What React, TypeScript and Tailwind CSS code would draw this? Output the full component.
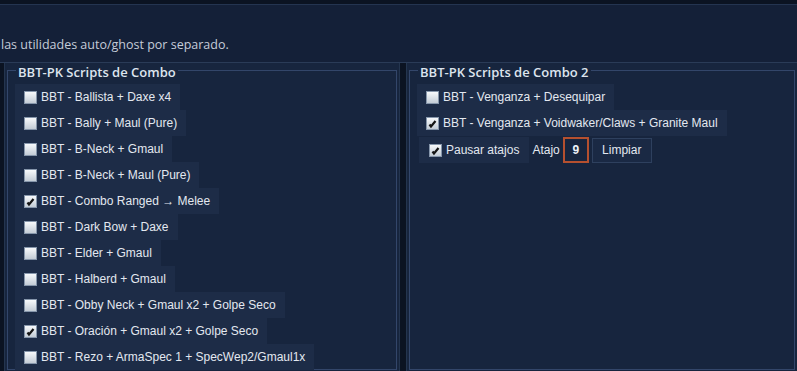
import { useState } from "react";

type Item = { label: string; checked: boolean };

const leftItems: Item[] = [
  { label: "BBT - Ballista + Daxe x4", checked: false },
  { label: "BBT - Bally + Maul (Pure)", checked: false },
  { label: "BBT - B-Neck + Gmaul", checked: false },
  { label: "BBT - B-Neck + Maul (Pure)", checked: false },
  { label: "BBT - Combo Ranged \u2192 Melee", checked: true },
  { label: "BBT - Dark Bow + Daxe", checked: false },
  { label: "BBT - Elder + Gmaul", checked: false },
  { label: "BBT - Halberd + Gmaul", checked: false },
  { label: "BBT - Obby Neck + Gmaul x2 + Golpe Seco", checked: false },
  { label: "BBT - Oración + Gmaul x2 + Golpe Seco", checked: true },
  { label: "BBT - Rezo + ArmaSpec 1 + SpecWep2/Gmaul1x", checked: false },
];

const rightItems: Item[] = [
  { label: "BBT - Venganza + Desequipar", checked: false },
  { label: "BBT - Venganza + Voidwaker/Claws + Granite Maul", checked: true },
];

function Box({ checked }: { checked: boolean }) {
  return (
    <span className="w-[13px] h-[13px] shrink-0 border border-[#8696ab] bg-gradient-to-b from-[#f7f9fb] to-[#c3ccd6] flex items-center justify-center">
      {checked && (
        <svg width="11" height="11" viewBox="0 0 11 11">
          <polyline points="2.5,6.5 4,8.5 8.5,3" fill="none" stroke="#141414" strokeWidth="2.2" />
        </svg>
      )}
    </span>
  );
}

function Check({ item, onToggle }: { item: Item; onToggle: () => void }) {
  return (
    <div
      onClick={onToggle}
      className="h-[26px] w-fit flex items-center gap-[4px] pl-[9px] pr-[9px] bg-[#1d2c47] cursor-default"
    >
      <Box checked={item.checked} />
      <span className="text-[12px] text-[#e3e8f0] whitespace-nowrap">{item.label}</span>
    </div>
  );
}

function Group({ title, children }: { title: string; children: React.ReactNode }) {
  return (
    <div className="relative mt-[7px] ml-[2px] mr-[2px] h-[300px] border border-[#33466a] pt-[13px] pl-[7px]">
      <span className="absolute -top-[8px] left-[8px] px-[2px] bg-[#17253e] text-[13px] font-semibold text-[#dde4ee] font-['Open_Sans',sans-serif] leading-[18px]">
        {title}
      </span>
      {children}
    </div>
  );
}

export default function App() {
  const [left, setLeft] = useState(leftItems);
  const [right, setRight] = useState(rightItems);
  const [pause, setPause] = useState(true);

  return (
    <div className="w-[797px] h-[371px] overflow-hidden bg-[#0b1322] font-['Liberation_Sans',Arial,sans-serif]">
      <div className="h-[4px]" />
      {/* header strip */}
      <div className="h-[59px] bg-[#142038] border-t border-[#243450] border-b border-b-[#2a3b57] flex items-end pb-[7px]">
        <span className="pl-[1px] text-[12.5px] text-[#c5ccd8] font-['Open_Sans',sans-serif]">
          las utilidades auto/ghost por separado.
        </span>
      </div>

      <div className="flex pl-[4px] gap-[6px] h-[310px]">
        <div className="w-[396px] bg-[#17253e] border-l border-r border-[#24354f]">
          <Group title="BBT-PK Scripts de Combo">
            {left.map((it, i) => (
              <Check
                key={it.label}
                item={it}
                onToggle={() => setLeft(left.map((x, j) => (j === i ? { ...x, checked: !x.checked } : x)))}
              />
            ))}
          </Group>
        </div>

        <div className="flex-1 bg-[#17253e] border-l border-[#24354f]">
          <Group title="BBT-PK Scripts de Combo 2">
            {right.map((it, i) => (
              <Check
                key={it.label}
                item={it}
                onToggle={() => setRight(right.map((x, j) => (j === i ? { ...x, checked: !x.checked } : x)))}
              />
            ))}
            <div className="flex items-center h-[26px] mt-[1px]">
              <div
                onClick={() => setPause(!pause)}
                className="h-[26px] flex items-center gap-[4px] pl-[10px] pr-[10px] ml-[2px] bg-[#1d2c47]"
              >
                <Box checked={pause} />
                <span className="text-[12px] text-[#e3e8f0]">Pausar atajos</span>
              </div>
              <span className="ml-[3px] text-[12px] text-[#e3e8f0]">Atajo</span>
              <div className="ml-[3px] w-[26px] h-[26px] border-2 border-[#b5502f] flex items-center justify-center text-[12px] font-bold text-[#eef2f7]">
                9
              </div>
              <button className="ml-[3px] w-[60px] h-[25px] border border-[#2e405e] bg-[#1a2944] text-[12px] text-[#e3e8f0]">
                Limpiar
              </button>
            </div>
          </Group>
        </div>
      </div>
    </div>
  );
}
